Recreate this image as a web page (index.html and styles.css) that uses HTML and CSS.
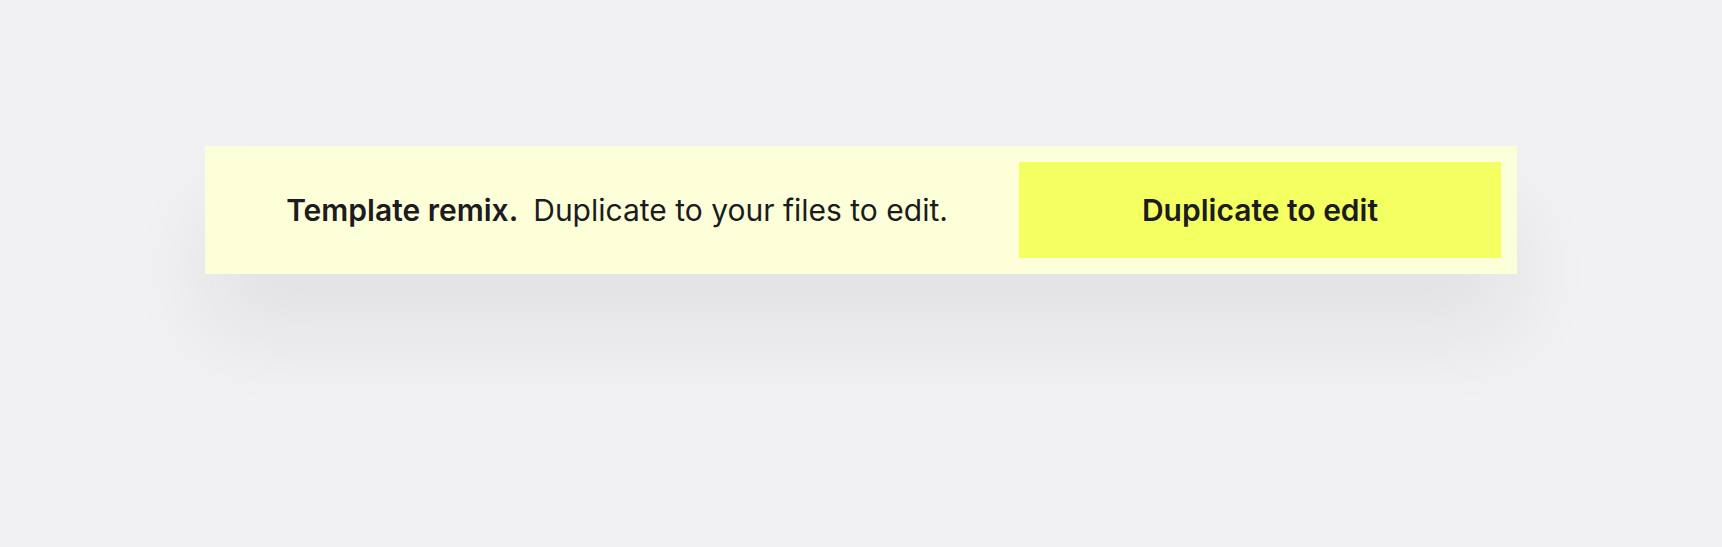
FILE: index.html
```html
<!DOCTYPE html>
<html lang="en">
<head>
<meta charset="utf-8">
<title>Template remix</title>
<link rel="stylesheet" href="styles.css">
</head>
<body>
<div class="page">
  <div class="banner">
    <p class="message"><strong class="lead">Template remix.</strong>Duplicate to your files to edit.</p>
    <button class="cta" type="button">Duplicate to edit</button>
  </div>
</div>
</body>
</html>
```
FILE: styles.css
```css
html {
  background: #f1f1f3;
}
body {
  margin: 0;
  padding: 0;
  font-family: Inter, "Noto Sans", sans-serif;
  color: #1c1b1f;
}
.page {
  display: flex;
  justify-content: center;
  align-items: flex-start;
  padding-top: 146px;
  min-height: 547px;
  box-sizing: border-box;
}
.banner {
  width: 1312px;
  height: 128px;
  box-sizing: border-box;
  background: #fcffd8;
  display: flex;
  align-items: center;
  padding: 16px 16px 16px 0;
  box-shadow: 0 60px 86px 0 rgba(35, 25, 45, 0.065);
}
.message {
  flex: 1;
  margin: 0;
  text-align: center;
  font-size: 30px;
  font-weight: 400;
  padding-left: 10px;
}
.lead {
  font-weight: 600;
  margin-right: 15px;
}
.cta {
  width: 482px;
  height: 96px;
  border: 0;
  border-radius: 0;
  background: #f4ff62;
  color: #1c1b1f;
  font-family: Inter, "Noto Sans", sans-serif;
  font-size: 30px;
  font-weight: 600;
  cursor: pointer;
}
```
